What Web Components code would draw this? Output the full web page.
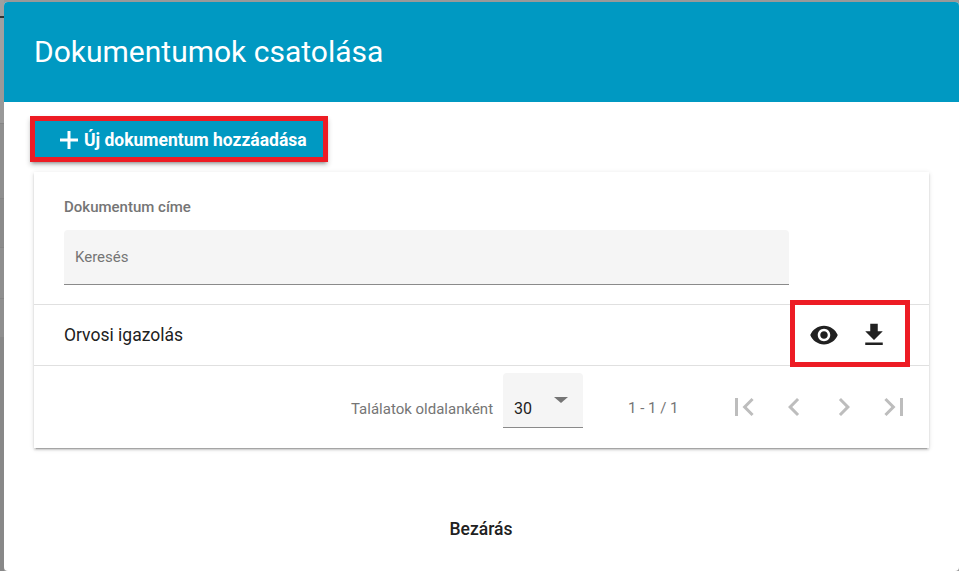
<!DOCTYPE html>
<html lang="hu">
<head>
<meta charset="utf-8">
<title>Dokumentumok csatolása</title>
<style>
  html, body { margin: 0; height: 100%; overflow: hidden; }
  body { font-family: Roboto, "Liberation Sans", sans-serif; }
</style>
</head>
<body>
<template id="page-backdrop-tpl">
  <style>
    :host { display: flex; width: 959px; height: 571px; background: #999; overflow: hidden; }
    .strip { width: 4px; flex: none; display: flex; flex-direction: column; }
    .strip div { box-sizing: border-box; border-bottom: 1px solid #858585; background: #8f8f8f; }
    .main { flex: 1; min-width: 0; padding-top: 2px; }
  </style>
  <div class="strip">
    <div style="height:18px;background:#a0a0a0;border-bottom:2px solid #333"></div>
    <div style="height:42px;background:#a0a0a0;border-bottom:0"></div>
    <div style="height:64px;background:#999"></div>
    <div style="height:75px"></div>
    <div style="height:49px;background:#8b8b8b"></div>
    <div style="height:51px"></div>
    <div style="height:38px;border-bottom:0"></div>
    <div style="flex:1;background:#888;border-bottom:0"></div>
  </div>
  <div class="main"><slot></slot></div>
</template>

<template id="doc-dialog-tpl">
  <style>
    :host { display: flex; flex-direction: column; height: 569px; background: #fff; border-radius: 4px; overflow: hidden; }
    header { height: 100px; flex: none; background: #0099c2; color: #fff; display: flex; align-items: center; padding-left: 30px; font-size: 30px; font-weight: 400; padding-bottom: 1px; box-sizing: border-box; }
    .content { flex: 1; padding: 14px 30px 0 26px; display: flex; flex-direction: column; align-items: flex-start; }
    footer { height: 84px; flex: none; display: flex; align-items: center; justify-content: center; font-size: 17.5px; font-weight: 500; color: #212121; padding-right: 1px; box-sizing: border-box; }
  </style>
  <header><slot name="title"></slot></header>
  <div class="content"><slot></slot></div>
  <footer><slot name="actions"></slot></footer>
</template>

<template id="add-button-tpl">
  <style>
    :host { display: block; }
    button { all: unset; box-sizing: border-box; width: 298px; height: 46px; border: 5px solid #ed1c24; background: #0099c2; color: #fff; display: flex; align-items: center; gap: 4px; padding: 2px 0 0 23px; font: 700 17.5px Roboto, sans-serif; box-shadow: 0 3px 3px -2px rgba(0,0,0,.3), 0 3px 5px rgba(0,0,0,.2); }
    svg { width: 22px; height: 22px; fill: #fff; flex: none; }
  </style>
  <button><svg viewBox="0 0 22 22"><path d="M9.500 2h3v7.500H20v3h-7.500V20h-3v-7.500H2v-3h7.500z"/></svg><slot></slot></button>
</template>

<template id="doc-card-tpl">
  <style>
    :host { display: block; width: 895px; margin: 10px 0 0 4px; background: #fff; box-shadow: 0 3px 1px -2px rgba(0,0,0,.2), 0 2px 2px rgba(0,0,0,.14), 0 1px 5px rgba(0,0,0,.12); }
  </style>
  <slot></slot>
</template>

<template id="filter-head-tpl">
  <style>
    :host { display: block; height: 133px; box-sizing: border-box; padding: 27px 140px 0 30px; border-bottom: 1px solid #e0e0e0; }
    label { display: block; font-size: 15px; font-weight: 500; line-height: 16px; color: #757575; margin-bottom: 15px; }
    .field { height: 55px; box-sizing: border-box; background: #f5f5f5; border-bottom: 1px solid #8a8a8a; border-radius: 4px 4px 0 0; padding: 0 11px 0; display: flex; align-items: center; font-size: 15px; color: #757575; }
  </style>
  <label><slot name="label"></slot></label>
  <div class="field"><slot></slot></div>
</template>

<template id="doc-row-tpl">
  <style>
    :host { display: flex; align-items: center; height: 61px; box-sizing: border-box; padding: 0 19px 0 30px; border-bottom: 1px solid #e0e0e0; position: relative; font-size: 17.5px; color: #212121; }
    .name { flex: 1; padding-bottom: 1px; }
    .actions { display: flex; align-items: center; gap: 23px; }
    svg { display: block; fill: #212121; }
    .mark { position: absolute; left: 756px; top: -5px; width: 120px; height: 67px; box-sizing: border-box; border: 5px solid #ed1c24; }
  </style>
  <span class="name"><slot></slot></span>
  <div class="actions" style="margin-right:21px">
    <svg width="30" height="30" viewBox="0 0 24 24"><path d="M12 4.500C7 4.500 2.730 7.610 1 12c1.730 4.390 6 7.500 11 7.500s9.270-3.110 11-7.500c-1.730-4.390-6-7.500-11-7.500zM12 17c-2.760 0-5-2.240-5-5s2.240-5 5-5 5 2.240 5 5-2.240 5-5 5zm0-8c-1.660 0-3 1.340-3 3s1.340 3 3 3 3-1.340 3-3-1.340-3-3-3z"/></svg>
    <svg width="30" height="30" viewBox="0 0 24 24" style="margin-left:-3px"><path d="M19 9h-4V3H9v6H5l7 7 7-7zM5 18v2h14v-2H5z"/></svg>
  </div>
  <div class="mark"></div>
</template>

<template id="page-bar-tpl">
  <style>
    :host { display: flex; align-items: center; height: 82px; font-size: 15px; color: #757575; }
    .label { margin-left: 317px; width: 152px; padding-top: 3px; box-sizing: border-box; }
    .select { width: 80px; height: 55px; margin-bottom: 14px; box-sizing: border-box; background: #f5f5f5; border-bottom: 1px solid #8a8a8a; border-radius: 4px 4px 0 0; position: relative; color: #212121; padding: 27px 0 0 11px; line-height: 17px; font-size: 16px; }
    .select i { position: absolute; left: 51px; top: 24px; width: 0; height: 0; border: 7px solid transparent; border-top: 6px solid #757575; border-bottom: 0; }
    .range { margin-left: 45px; width: 98px; padding-top: 1px; box-sizing: border-box; }
    .nav { display: flex; gap: 14px; }
    svg { display: block; width: 36px; height: 36px; fill: #bdbdbd; }
  </style>
  <span class="label"><slot name="label"></slot></span>
  <div class="select"><slot name="size"></slot><i></i></div>
  <span class="range"><slot name="range"></slot></span>
  <div class="nav">
    <svg viewBox="0 0 24 24"><path d="M18.410 16.590 13.820 12l4.590-4.590L17 6l-6 6 6 6zM6 6h2v12H6z"/></svg>
    <svg viewBox="0 0 24 24"><path d="M15.410 7.410 14 6l-6 6 6 6 1.410-1.410L10.830 12z"/></svg>
    <svg viewBox="0 0 24 24"><path d="M10 6 8.590 7.410 13.170 12l-4.580 4.590L10 18l6-6z"/></svg>
    <svg viewBox="0 0 24 24"><path d="M5.590 7.410 10.180 12l-4.590 4.590L7 18l6-6-6-6zM16 6h2v12h-2z"/></svg>
  </div>
</template>

<page-backdrop>
  <doc-dialog>
    <span slot="title">Dokumentumok csatolása</span>
    <add-button>Új dokumentum hozzáadása</add-button>
    <doc-card>
      <filter-head><span slot="label">Dokumentum címe</span>Keresés</filter-head>
      <doc-row>Orvosi igazolás</doc-row>
      <page-bar>
        <span slot="label">Találatok oldalanként</span>
        <span slot="size">30</span>
        <span slot="range">1 - 1 / 1</span>
      </page-bar>
    </doc-card>
    <span slot="actions">Bezárás</span>
  </doc-dialog>
</page-backdrop>

<script>
  // every element just stamps its own template into an open shadow root
  const names = ['page-backdrop', 'doc-dialog', 'add-button', 'doc-card', 'filter-head', 'doc-row', 'page-bar'];
  names.forEach((name) => {
    customElements.define(name, class extends HTMLElement {
      constructor() {
        super();
        const tpl = document.getElementById(name + '-tpl');
        this.attachShadow({ mode: 'open' }).appendChild(tpl.content.cloneNode(true));
      }
    });
  });
</script>
</body>
</html>
